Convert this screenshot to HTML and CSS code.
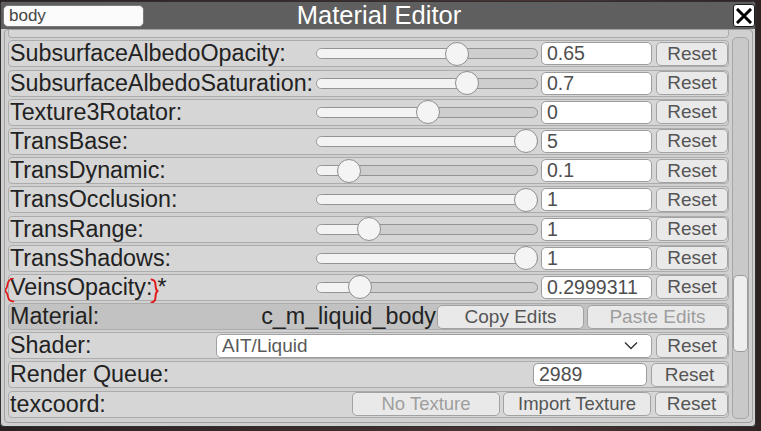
FILE: index.html
```html
<!DOCTYPE html>
<html>
<head>
<meta charset="utf-8">
<link rel="stylesheet" href="styles.css">
</head>
<body>
<div class="window">
  <div class="titlebar">
    <div class="search">body</div>
    <div class="title">Material Editor</div>
    <div class="close"><svg width="16" height="16" viewBox="0 0 16 16"><path d="M2 2L14 14M14 2L2 14" stroke="#000" stroke-width="3" stroke-linecap="square"/></svg></div>
  </div>
  <div class="panel">
    <div class="scrollview">
      <div class="content">
        <div class="row partial"></div>
        <div class="row">
          <span class="label">SubsurfaceAlbedoOpacity:</span>
          <div class="slider" style="--f:0.65"><div class="track"><div class="fill"></div></div><div class="thumb"></div></div>
          <div class="field">0.65</div>
          <div class="btn reset">Reset</div>
        </div>
        <div class="row">
          <span class="label">SubsurfaceAlbedoSaturation:</span>
          <div class="slider" style="--f:0.70"><div class="track"><div class="fill"></div></div><div class="thumb"></div></div>
          <div class="field">0.7</div>
          <div class="btn reset">Reset</div>
        </div>
        <div class="row">
          <span class="label">Texture3Rotator:</span>
          <div class="slider" style="--f:0.505"><div class="track"><div class="fill"></div></div><div class="thumb"></div></div>
          <div class="field">0</div>
          <div class="btn reset">Reset</div>
        </div>
        <div class="row">
          <span class="label">TransBase:</span>
          <div class="slider" style="--f:1"><div class="track"><div class="fill"></div></div><div class="thumb"></div></div>
          <div class="field">5</div>
          <div class="btn reset">Reset</div>
        </div>
        <div class="row">
          <span class="label">TransDynamic:</span>
          <div class="slider" style="--f:0.106"><div class="track"><div class="fill"></div></div><div class="thumb"></div></div>
          <div class="field">0.1</div>
          <div class="btn reset">Reset</div>
        </div>
        <div class="row">
          <span class="label">TransOcclusion:</span>
          <div class="slider" style="--f:1"><div class="track"><div class="fill"></div></div><div class="thumb"></div></div>
          <div class="field">1</div>
          <div class="btn reset">Reset</div>
        </div>
        <div class="row">
          <span class="label">TransRange:</span>
          <div class="slider" style="--f:0.207"><div class="track"><div class="fill"></div></div><div class="thumb"></div></div>
          <div class="field">1</div>
          <div class="btn reset">Reset</div>
        </div>
        <div class="row">
          <span class="label">TransShadows:</span>
          <div class="slider" style="--f:1"><div class="track"><div class="fill"></div></div><div class="thumb"></div></div>
          <div class="field">1</div>
          <div class="btn reset">Reset</div>
        </div>
        <div class="row annotated">
          <span class="label">VeinsOpacity:<span class="star">*</span></span>
          <svg class="mark mark-left" width="12" height="26" viewBox="0 0 12 26"><path d="M10 1.5Q5.5 2 4.5 7.5Q4 12 1.5 13.5Q4.5 15.5 5 20Q6 24.5 10.5 24.5" fill="none" stroke="#e01818" stroke-width="1.7" stroke-linecap="round"/></svg>
          <svg class="mark mark-right" width="9" height="26" viewBox="0 0 9 26"><path d="M1.5 1.5Q5.5 2 5.5 7Q5.5 11.5 7.5 13Q5.5 14.5 5.5 19Q5.5 24 1.5 24.5" fill="none" stroke="#e01818" stroke-width="1.9" stroke-linecap="round"/></svg>
          <div class="slider" style="--f:0.16"><div class="track"><div class="fill"></div></div><div class="thumb"></div></div>
          <div class="field">0.2999311</div>
          <div class="btn reset">Reset</div>
        </div>
        <div class="row material">
          <span class="label grow">Material:</span>
          <span class="matname">c_m_liquid_body</span>
          <div class="btn copy">Copy Edits</div>
          <div class="btn paste disabled">Paste Edits</div>
        </div>
        <div class="row">
          <span class="label shader-label">Shader:</span>
          <div class="dropdown"><span>AIT/Liquid</span><svg width="14" height="9" viewBox="0 0 14 9"><path d="M1 1.5L7 7.5L13 1.5" fill="none" stroke="#333" stroke-width="1.4"/></svg></div>
          <div class="btn reset">Reset</div>
        </div>
        <div class="row">
          <span class="label grow">Render Queue:</span>
          <div class="field queue">2989</div>
          <div class="btn reset wide">Reset</div>
        </div>
        <div class="row">
          <span class="label grow">texcoord:</span>
          <div class="btn tex disabled">No Texture</div>
          <div class="btn tex">Import Texture</div>
          <div class="btn reset mid">Reset</div>
        </div>
      </div>
      <div class="scrollbar"><div class="sthumb"></div></div>
    </div>
  </div>
</div>
</body>
</html>
```
FILE: styles.css
```css
html, body {
  margin: 0;
  padding: 0;
}
body {
  width: 761px;
  height: 431px;
  overflow: hidden;
  background: linear-gradient(90deg, #2a2222 0%, #3b2b2b 40%, #4a3434 70%, #2e2323 100%);
  font-family: "Liberation Sans", Arial, sans-serif;
}
.window {
  box-sizing: border-box;
  width: 756px;
  height: 426px;
  margin-top: 1px;
  background: #cfcfcf;
  border: 1px solid #2f2f2f;
  border-radius: 4px;
  display: flex;
  flex-direction: column;
  overflow: hidden;
}
.titlebar {
  height: 27px;
  flex: none;
  background: #5f5f5f;
  display: grid;
  grid-template-columns: 1fr auto 1fr;
  align-items: center;
  padding: 0 0 0 2px;
}
.search {
  justify-self: start;
  box-sizing: border-box;
  width: 141px;
  height: 22px;
  background: #fbfbfb;
  border: 1px solid #7a7a7a;
  border-radius: 5px;
  font-size: 17px;
  line-height: 20px;
  color: #454545;
  padding-left: 5px;
}
.title {
  color: #ffffff;
  font-size: 25.5px;
  line-height: 27px;
}
.close {
  justify-self: end;
  box-sizing: border-box;
  width: 22px;
  height: 23px;
  background: #ffffff;
  border: 1px solid #1a1a1a;
  border-radius: 3px;
  display: flex;
  align-items: center;
  justify-content: center;
}
.panel {
  flex: 1;
  padding: 0 2px 2px 3px;
  display: flex;
}
.scrollview {
  box-sizing: border-box;
  flex: 1;
  height: 394px;
  border: 1px solid #a0a0a0;
  border-radius: 4px;
  background: #d0d0d0;
  display: flex;
  padding: 0 2px 0 3px;
  gap: 3px;
  overflow: hidden;
}
.content {
  width: 721px;
  display: flex;
  flex-direction: column;
  gap: 2.2px;
}
.row {
  box-sizing: border-box;
  position: relative;
  height: 27px;
  flex: none;
  background: #d6d6d6;
  border: 1px solid #acacac;
  border-radius: 4px;
  display: flex;
  align-items: center;
  padding: 0;
}
.row.partial {
  height: 8.2px;
  border-top: none;
  border-radius: 0 0 4px 4px;
}
.row.material {
  background: #c2c2c2;
}
.label {
  box-sizing: border-box;
  width: 307px;
  flex: none;
  white-space: nowrap;
  font-size: 23.3px;
  line-height: 27px;
  color: #222222;
  padding-left: 1px;
}
.label.grow {
  width: auto;
  flex: 1;
}
.label.shader-label {
  width: 207px;
}
.star {
  margin-left: 5px;
}
.slider {
  position: relative;
  width: 222px;
  height: 24px;
  flex: none;
  display: flex;
  align-items: center;
}
.track {
  box-sizing: border-box;
  width: 100%;
  height: 11px;
  border: 1px solid #949494;
  border-radius: 6px;
  background: #cecece;
  overflow: hidden;
}
.fill {
  height: 100%;
  width: calc(var(--f) * (100% - 24px) + 12px);
  background: #f3f3f3;
}
.thumb {
  position: absolute;
  top: 0;
  left: calc(var(--f) * (100% - 24px));
  box-sizing: border-box;
  width: 24px;
  height: 24px;
  border-radius: 50%;
  background: #f4f4f4;
  border: 1px solid #8e8e8e;
}
.field {
  box-sizing: border-box;
  width: 111px;
  height: 23px;
  flex: none;
  margin-left: 3px;
  background: #ffffff;
  border: 1px solid #9c9c9c;
  border-radius: 5px;
  font-size: 19.5px;
  line-height: 21px;
  color: #4e4e4e;
  padding-left: 5px;
  white-space: nowrap;
}
.field.queue {
  width: 114px;
  margin-left: 0;
}
.btn {
  box-sizing: border-box;
  height: 24px;
  flex: none;
  background: #e9e9e9;
  border: 1px solid #a2a2a2;
  border-radius: 5px;
  font-size: 19px;
  line-height: 22px;
  color: #555555;
  text-align: center;
  white-space: nowrap;
}
.btn.disabled {
  color: #9e9e9e;
}
.reset {
  width: 72px;
  margin-left: 4px;
}
.reset.wide {
  width: 77px;
}
.reset.mid {
  width: 73px;
}
.matname {
  font-size: 23.3px;
  line-height: 27px;
  color: #222222;
  margin-right: 1px;
}
.copy {
  width: 147px;
}
.paste {
  width: 141px;
  margin-left: 3px;
}
.tex {
  width: 148px;
  margin-right: 3px;
  font-size: 18.5px;
}
.tex + .reset {
  margin-left: 1px;
}
.dropdown {
  box-sizing: border-box;
  width: 436px;
  height: 24px;
  flex: none;
  background: #ffffff;
  border: 1px solid #a0a0a0;
  border-radius: 5px;
  display: flex;
  align-items: center;
  justify-content: space-between;
  padding: 0 13px 0 5px;
  font-size: 19px;
  color: #5a5a5a;
}
.mark {
  position: absolute;
}
.mark-left {
  left: -6px;
  top: 2px;
}
.mark-right {
  left: 141px;
  top: 3px;
}
.scrollbar {
  box-sizing: border-box;
  width: 17px;
  height: 382px;
  margin-top: 7px;
  flex: none;
  background: #c9c9c9;
  border: 1px solid #a6a6a6;
  border-radius: 5px;
  padding-top: 237px;
}
.sthumb {
  box-sizing: border-box;
  width: 15px;
  height: 77px;
  background: #eeeeee;
  border: 1px solid #9a9a9a;
  border-radius: 5px;
}
```
